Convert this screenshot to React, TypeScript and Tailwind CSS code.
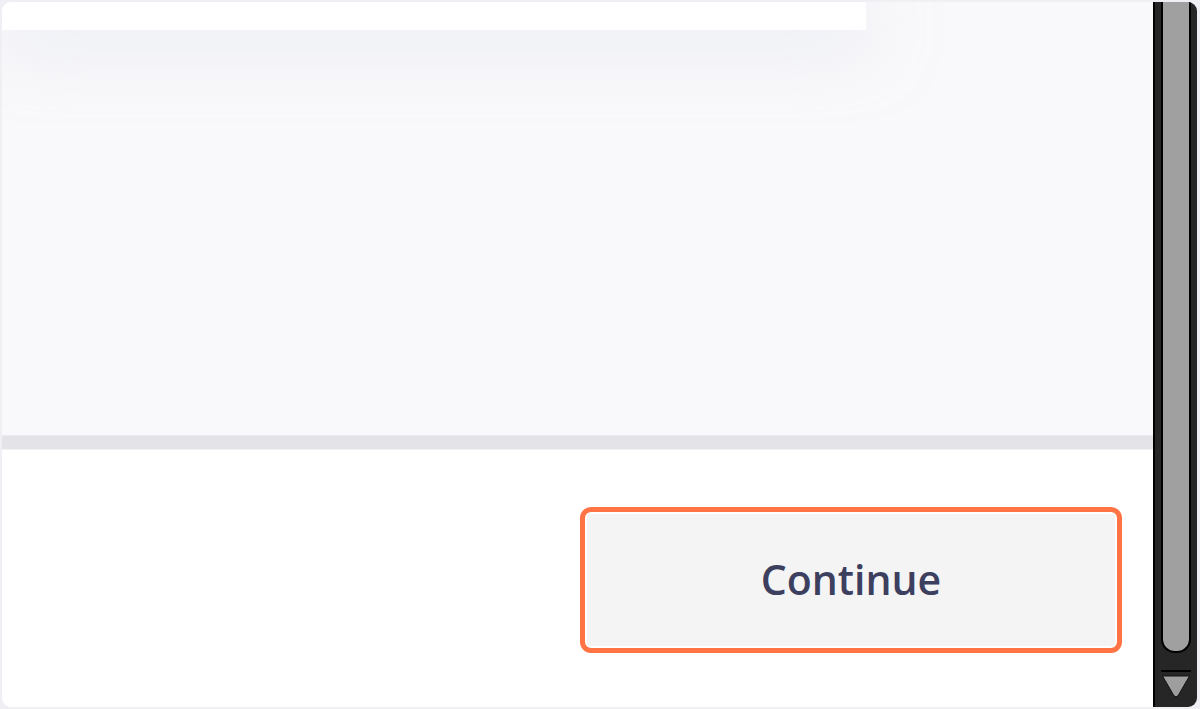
import React from "react";

export default function App() {
  return (
    <div className="w-[1200px] h-[709px] bg-[#efeff4] pt-[2px] pl-[2px] pr-[3px] pb-[2px]">
      <div className="w-full h-full rounded-[9px] overflow-hidden bg-white flex">
        <div className="flex-1 flex flex-col">
          <div className="h-[433px] bg-[#f9f9fb] relative overflow-hidden">
            <div className="w-[864px] h-[28px] bg-white shadow-[0_10px_70px_rgba(205,210,228,0.5)]" />
          </div>
          <div className="h-[15px] bg-[#e3e3e8] border-t border-[#ececf0] border-b border-b-[#f2f2f5]" />
          <div className="flex-1 flex justify-end pt-[57px] pr-[31px]">
            <div className="w-[542px] h-[146px] rounded-[11px] border-[5px] border-[#ff7344] bg-white p-[2px]">
              <button className="w-full h-full bg-[#f4f4f4] rounded-[2px] flex items-center justify-center text-[41px] font-semibold text-[#3d3f5f] tracking-[0px]" style={{ fontFamily: '"Open Sans", "Liberation Sans", sans-serif' }}>
                Continue
              </button>
            </div>
          </div>
        </div>
        <div className="w-[44px] bg-[#262626] border-l-[2px] border-black flex flex-col items-center pt-0 pb-[6px]">
          <div className="w-[30px] h-[651px] bg-[#a0a0a0] border-x-[2px] border-b-[2px] border-black rounded-b-[14px]" />
          <div className="w-[30px] h-[2px] bg-black mt-[17px]" />
          <svg width="30" height="26" viewBox="0 0 30 26" className="mt-[1px]">
            <path d="M1.5 3 L28.5 3 L17.5 22 Q15 25.5 12.5 22 Z" fill="#9e9e9e" stroke="#111" strokeWidth="1" strokeLinejoin="round" />
          </svg>
        </div>
      </div>
    </div>
  );
}
